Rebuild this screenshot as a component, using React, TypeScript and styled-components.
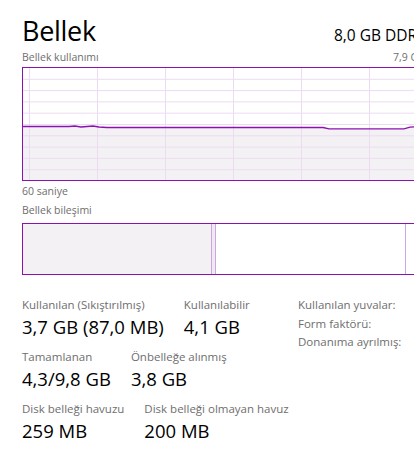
import React from "react";
import styled, { createGlobalStyle } from "styled-components";

const Global = createGlobalStyle`
  html, body { margin: 0; padding: 0; background: #ffffff; overflow: hidden; }
  body { font-family: "Open Sans", "Liberation Sans", sans-serif; color: #000; }
`;

const Page = styled.div`
  width: 460px;
  padding: 14px 0 0 22px;
  box-sizing: border-box;
  display: flex;
  flex-direction: column;
`;

const Header = styled.div`
  display: grid;
  grid-template-columns: 312px auto;
  align-items: baseline;
  height: 34px;
`;

const Title = styled.h1`
  margin: 0;
  font-weight: 400;
  font-size: 27px;
  line-height: 34px;
  letter-spacing: -0.3px;
`;

const Spec = styled.div`
  font-size: 15.5px;
  line-height: 20px;
  white-space: nowrap;
`;

const CaptionRow = styled.div<{ $split?: number }>`
  display: grid;
  grid-template-columns: ${(p) => (p.$split ? `${p.$split}px auto` : "auto")};
  font-size: 10.5px;
  line-height: 14px;
  color: #6e6e6e;
  white-space: nowrap;
  margin-top: ${(p) => (p.$split ? "2px" : "0")};
`;

const Caption = styled.div<{ $top?: number }>`
  font-size: 10.5px;
  line-height: 14px;
  color: #6e6e6e;
  margin-top: ${(p) => p.$top ?? 0}px;
  white-space: nowrap;
`;

const ChartBox = styled.div`
  margin-top: 3px;
  width: 420px;
  height: 114px;
  border: 1px solid #8b12ae;
  box-sizing: border-box;
  position: relative;
  overflow: hidden;
`;

const Composition = styled.div`
  margin-top: 6px;
  width: 420px;
  height: 52px;
  border-top: 1.5px solid #8b12ae;
  border-bottom: 1.5px solid #8b12ae;
  border-left: 1.5px solid #8b12ae;
  box-sizing: border-box;
  display: flex;
`;

const Segment = styled.div<{ $w: number; $fill: string; $divider?: boolean }>`
  width: ${(p) => p.$w}px;
  flex: none;
  background: ${(p) => p.$fill};
  border-right: ${(p) => (p.$divider ? "1px solid #cba8dc" : "none")};
`;

const Stats = styled.div`
  margin-top: 22px;
  display: grid;
  grid-template-columns: 276px auto;
`;

const StatRows = styled.div`
  display: flex;
  flex-direction: column;
  gap: 10px;
`;

const StatRow = styled.div`
  display: flex;
  gap: 20px;
`;

const Stat = styled.div`
  display: flex;
  flex-direction: column;
`;

const StatLabel = styled.div`
  font-size: 11.5px;
  line-height: 16px;
  color: #6e6e6e;
  white-space: nowrap;
`;

const StatValue = styled.div`
  font-size: 18.5px;
  line-height: 25px;
  margin-top: 1px;
  color: #000;
  white-space: nowrap;
`;

const Props = styled.div`
  display: flex;
  flex-direction: column;
  gap: 2.5px;
`;

const PropLabel = styled.div`
  font-size: 11.5px;
  line-height: 16px;
  color: #6e6e6e;
  white-space: nowrap;
`;

const W = 420;
const H = 112;
const cols = Array.from({ length: 7 }, (_, i) => 6.5 + i * 68);
const rows = Array.from({ length: 9 }, (_, i) => 11.3 * (i + 1));
const usage: [number, number][] = [
  [0, 58.5], [46, 58.5], [52, 58], [58, 59], [64, 58.5], [70, 58], [76, 59], [84, 59.5],
  [300, 59.5], [306, 60.8], [381, 60.8], [387, 59.2], [396, 58.6], [420, 58.6],
];

function UsageChart() {
  const line = usage.map(([x, y]) => `${x},${y}`).join(" ");
  const area = `0,${H} ${line} ${W},${H}`;
  return (
    <svg width={W} height={H} style={{ display: "block" }}>
      <polygon points={area} fill="#f3f1f4" />
      {rows.map((y) => (
        <line key={`r${y}`} x1={0} x2={W} y1={y} y2={y} stroke="#ecdcf1" strokeWidth={1} />
      ))}
      {cols.map((x) => (
        <line key={`c${x}`} x1={x} x2={x} y1={0} y2={H} stroke="#ecdcf1" strokeWidth={1} />
      ))}
      <polyline points={line} fill="none" stroke="#8b12ae" strokeWidth={1.3} />
    </svg>
  );
}

export default function App() {
  return (
    <>
      <Global />
      <Page>
        <Header>
          <Title>Bellek</Title>
          <Spec>8,0 GB DDR4</Spec>
        </Header>
        <CaptionRow $split={371}>
          <span>Bellek kullanımı</span>
          <span>7,9 GB</span>
        </CaptionRow>
        <ChartBox>
          <UsageChart />
        </ChartBox>
        <Caption $top={3}>60 saniye</Caption>
        <Caption $top={5}>Bellek bileşimi</Caption>
        <Composition>
          <Segment $w={188} $fill="#f3f1f4" $divider />
          <Segment $w={3} $fill="#f1e8f5" $divider />
          <Segment $w={189} $fill="#ffffff" $divider />
          <Segment $w={30} $fill="#ffffff" />
        </Composition>
        <Stats>
          <StatRows>
            <StatRow>
              <Stat>
                <StatLabel>Kullanılan (Sıkıştırılmış)</StatLabel>
                <StatValue>3,7 GB (87,0 MB)</StatValue>
              </Stat>
              <Stat>
                <StatLabel>Kullanılabilir</StatLabel>
                <StatValue>4,1 GB</StatValue>
              </Stat>
            </StatRow>
            <StatRow>
              <Stat>
                <StatLabel>Tamamlanan</StatLabel>
                <StatValue>4,3/9,8 GB</StatValue>
              </Stat>
              <Stat>
                <StatLabel>Önbelleğe alınmış</StatLabel>
                <StatValue>3,8 GB</StatValue>
              </Stat>
            </StatRow>
            <StatRow>
              <Stat>
                <StatLabel>Disk belleği havuzu</StatLabel>
                <StatValue>259 MB</StatValue>
              </Stat>
              <Stat>
                <StatLabel>Disk belleği olmayan havuz</StatLabel>
                <StatValue>200 MB</StatValue>
              </Stat>
            </StatRow>
          </StatRows>
          <Props>
            <PropLabel>Kullanılan yuvalar:</PropLabel>
            <PropLabel>Form faktörü:</PropLabel>
            <PropLabel>Donanıma ayrılmış:</PropLabel>
          </Props>
        </Stats>
      </Page>
    </>
  );
}
